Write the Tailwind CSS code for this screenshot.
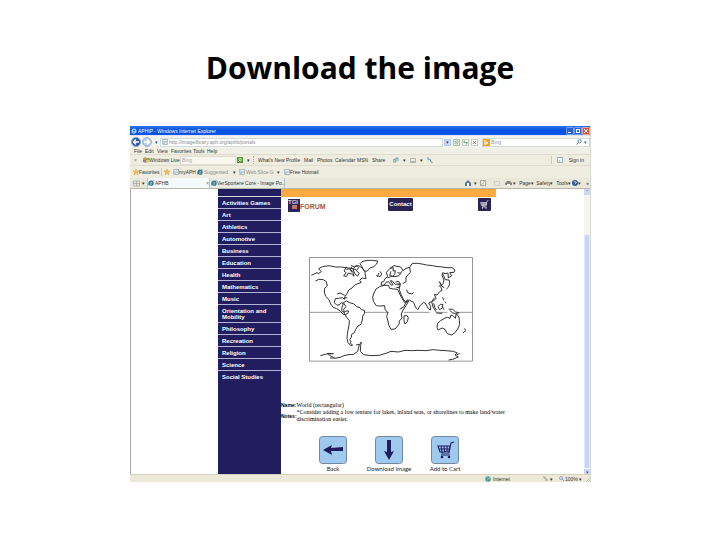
<!DOCTYPE html>
<html lang="en">
<head>
<meta charset="utf-8">
<title>Download the image</title>
<script src="https://cdn.jsdelivr.net/npm/@tailwindcss/browser@4"></script>
</head>
<body class="bg-white text-black font-['Liberation_Sans',Arial,sans-serif]">
<svg class="hidden" aria-hidden="true">
  <symbol id="page" viewBox="0 0 6 6"><rect x=".8" y=".5" width="4.6" height="5" fill="#f4f8fb" stroke="#87a2ad" stroke-width=".7"/><path d="M2 2v3M3 3h2" stroke="#6694b4" stroke-width=".8"/></symbol>
  <symbol id="ie" viewBox="0 0 6 6"><circle cx="3" cy="3.2" r="2" fill="none" stroke="#23708d" stroke-width="1.3"/><path d="M1 3.3h4M.5 5.5Q0 3 5.5.6" fill="none" stroke="#31758b" stroke-width=".8"/></symbol>
  <symbol id="star" viewBox="0 0 6 6"><path d="M3 0l.9 2H6L4.3 3.4 5 5.8 3 4.4 1 5.8l.7-2.4L0 2h2.1z" fill="#fbc04a" stroke="#d48a20" stroke-width=".4"/></symbol>
  <symbol id="cart" viewBox="0 0 18 18"><path d="M17 1l-3 1-2 10H4M1 5h12l-1 5-9 1zM4 5l1 6M7 5l.5 6M10 5v5M2 8h11M4 14h9" fill="none" stroke="currentColor" stroke-width="1.1"/><circle cx="5" cy="16" r="1.3" fill="currentColor"/><circle cx="12" cy="16" r="1.3" fill="currentColor"/></symbol>
</svg>

<main class="px-[130px] pt-[46px]">
  <h1 class="-mx-10 text-center font-['Open_Sans',sans-serif] text-[30px] leading-[44px] font-bold">Download the image</h1>

  <section class="mt-9 -mr-px border-r border-[#d8dcd0] bg-[#efede0] text-[5px] leading-[6px] whitespace-nowrap text-[#33332e]">
    <header class="flex h-[9px] items-center bg-linear-to-b from-[#2a73ea] via-[#0450df] to-[#0554ea] pl-px text-white">
      <svg class="mr-px size-[6px]" viewBox="0 0 6 6"><circle cx="3" cy="3.2" r="2" fill="none" stroke="#a6dcff" stroke-width="1.2"/><path d="M1 3.3h4" stroke="#fff" stroke-width=".7"/></svg>
      <span class="grow">APHIP - Windows Internet Explorer</span>
      <button aria-label="Minimize" class="flex size-2 items-end rounded-[1px] border border-[#719df0] bg-[#2862d8] p-px"><i class="h-px w-[3px] bg-white"></i></button>
      <button aria-label="Maximize" class="size-2 rounded-[1px] border border-[#719df0] bg-[#2862d8] p-px"><i class="block size-1 border border-white"></i></button>
      <button aria-label="Close" class="size-2 rounded-[1px] border border-[#e7a49a] bg-[#d8553b]"><svg viewBox="0 0 6 6"><path d="M1 1l4 4M5 1L1 5" stroke="#fff" stroke-width="1"/></svg></button>
    </header>

    <div class="flex h-[13px] items-center border-t border-[#dce6f4] bg-[#f3f3ed] pl-px">
      <button aria-label="Back" class="size-[10px] rounded-full border border-[#8ba5cb] bg-[#2456a5]"><svg viewBox="0 0 8 8"><path d="M7 4H2M4 1.5L1.5 4 4 6.5" fill="none" stroke="#fff" stroke-width="1.4"/></svg></button>
      <button aria-label="Forward" class="ml-px size-[10px] rounded-full border border-[#9db3cf] bg-[#b9cce4]"><svg viewBox="0 0 8 8"><path d="M1 4h5M4 1.5L6.500 4 4 6.500" fill="none" stroke="#fff" stroke-width="1.4"/></svg></button>
      <span class="w-2 text-center text-[#265a94]">▾</span>
      <label class="flex h-[9px] grow items-center border border-[#d3d9da] bg-white"><svg class="mr-px ml-px size-[6px]"><use href="#page"/></svg><input aria-label="Address" class="min-w-0 grow text-[#8d8d8d]" value="http://imagelibrary.aph.org/aphb/portals"></label>
      <span class="ml-px size-[7px] border border-[#b9c9e6] bg-[#cfdcf6] text-center leading-[5px] text-[#27488c]">▾</span>
      <button aria-label="Compatibility" class="ml-[2px] size-[7px] border border-[#abc6ab] bg-white"><svg viewBox="0 0 5 5"><path d="M1 1l3 3H1zM2 1h2v2" fill="none" stroke="#41a059" stroke-width=".6"/></svg></button>
      <button aria-label="Refresh" class="ml-[2px] size-[7px] border border-[#c6cdc6] bg-white"><svg viewBox="0 0 5 5"><path d="M1 3V1h1.500M4 2v2H2.500M1 2.500h3" fill="none" stroke="#399b52" stroke-width=".7"/></svg></button>
      <button aria-label="Stop" class="ml-[2px] size-[7px] border border-[#c6cdc6] bg-white"><svg viewBox="0 0 5 5"><path d="M1 1l3 3M4 1L1 4" stroke="#bb3d39" stroke-width=".8"/></svg></button>
      <label class="ml-1 flex h-[9px] w-[108px] items-center border border-[#d3d9da] bg-white"><svg class="size-[7px]" viewBox="0 0 7 7"><rect width="7" height="7" fill="#f7a31e"/><path d="M2 1v4.500l3-1.500-2-1" fill="none" stroke="#fff"/></svg><input aria-label="Search" class="ml-px w-20 text-[#969696]" value="Bing">
        <svg class="ml-[5px] size-[6px]" viewBox="0 0 6 6"><circle cx="3.600" cy="2.200" r="1.600" fill="none" stroke="#3e6da6" stroke-width=".8"/><path d="M2.500 3.500L.5 5.500" stroke="#3e6da6"/></svg><span class="ml-[2px] text-[#47658e]">▾</span></label>
    </div>

    <nav class="flex h-[6px] items-center bg-[#f1f0e6] pl-1">
      <span class="w-[11px]">File</span><span class="w-3">Edit</span><span class="w-[14px]">View</span><span class="w-[22px]">Favorites</span><span class="w-[14px]">Tools</span><span>Help</span>
    </nav>

    <div class="flex h-3 items-center border-y border-[#dfddcf] pl-1">
      <span class="w-[9px] text-[#777]">×</span>
      <svg class="size-[6px]" viewBox="0 0 6 6"><path d="M0 1l3-1v3H0z" fill="#e0904a"/><path d="M3 1h3v2H3z" fill="#83ab50"/><path d="M0 3h3v3L0 5z" fill="#5e8cc0"/><path d="M3 3h3v2l-3 1z" fill="#eac153"/></svg>
      <span class="w-[31px]">Windows Live</span>
      <input aria-label="Live search" class="h-[9px] w-14 border border-[#dddcd0] bg-[#f8f7f0] pl-px text-[#aaa]" value="Bing">
      <button aria-label="Go" class="ml-px size-[6px] bg-[#559a36]"><svg viewBox="0 0 6 6"><circle cx="3.200" cy="2.600" r="1.200" fill="none" stroke="#fff" stroke-width=".8"/><path d="M1 5l1.500-1.500" stroke="#fff"/></svg></button>
      <span class="ml-1 w-[6px]">▾</span>
      <span class="mr-[4px] h-2 border-l border-dotted border-[#aaa]"></span>
      <span class="w-7">What's New</span><span class="w-[18px]">Profile</span><span class="w-[13px]">Mail</span><span class="w-[18px]">Photos</span><span class="w-[22px]">Calendar</span><span class="w-[15px]">MSN</span><span class="w-[21px]">Share</span>
      <svg class="size-[6px]" viewBox="0 0 6 6"><path d="M0 6V3l2-1v4M3 5V1h2v3" fill="none" stroke="#5d9696" stroke-width=".9"/></svg><span class="ml-1 w-[7px]">▾</span>
      <svg class="size-[6px]" viewBox="0 0 6 6"><path d="M.5 1.500h5v3h-5zM0 5.500h6" fill="none" stroke="#9b9b93" stroke-width=".7"/></svg><span class="ml-1 w-[7px]">▾</span>
      <svg class="size-[6px]" viewBox="0 0 6 6"><path d="M1 0v3l2-1 1 3 2 1" fill="none" stroke="#6591b0" stroke-width=".9"/></svg>
      <span class="grow"></span>
      <span class="mr-[5px] h-2 border-l border-[#cbc9bb]"></span><span class="flex size-[6px] items-center justify-center border border-[#92b5c0] bg-white text-[#4c8da0]">‹</span><span class="mr-[6px] ml-[6px]">Sign in</span>
    </div>

    <div class="flex h-3 items-center pl-[3px]">
      <svg class="size-[6px]"><use href="#star"/></svg><span class="w-[22px]">Favorites</span>
      <span class="mr-[2px] h-2 border-l border-[#cbc9bb]"></span>
      <svg class="mr-[3px] size-[6px]"><use href="#star"/></svg>
      <svg class="size-[6px]"><use href="#page"/></svg><span class="w-[18px]">myAPH</span>
      <svg class="mr-px size-[6px]"><use href="#ie"/></svg><span class="w-[29px] text-[#8c8c84]">Suggested</span><span class="w-[6px]">▾</span>
      <svg class="mr-px size-[6px]"><use href="#page"/></svg><span class="w-[31px] text-[#8c8c84]">Web Slice G</span><span class="w-[7px]">▾</span>
      <svg class="size-[6px]"><use href="#page"/></svg><span>Free Hotmail</span>
    </div>

    <div class="flex h-[11px] items-center border-b border-[#b8b8ac] bg-[#eae8da] pl-[3px]">
      <svg class="size-[7px]" viewBox="0 0 7 7"><path d="M.5 1h6v5h-6zM.5 3.500h6M3.500 1v5" fill="none" stroke="#98a0a3" stroke-width=".7"/></svg><span class="ml-[2px] w-[5px]">▾</span>
      <a href="#" class="flex h-full w-[63px] items-center border-x border-[#b7c3ce] bg-[#f6f9fb]"><svg class="mr-px size-[6px]"><use href="#ie"/></svg><span class="grow">APHB</span><span class="text-[#667a8d]">×</span></a>
      <a href="#" class="flex h-full w-[75px] items-center border-r border-[#b7c3ce] bg-[#e9ebe5] pl-px"><svg class="size-[6px] shrink-0"><use href="#ie"/></svg><span>VerSportere Core - Image Po..</span></a>
      <span class="grow"></span>
      <svg class="size-[6px]" viewBox="0 0 6 6"><path d="M0 3l3-3 3 3v3H0z" fill="#5379a5"/><path d="M2 6V3h2v3" fill="#fff"/></svg><span class="ml-[3px] w-[6px]">▾</span>
      <svg class="mr-2 size-[6px]" viewBox="0 0 6 6"><rect x=".5" y=".5" width="5" height="5" fill="none" stroke="#aaa99e"/><path d="M1 5l4-4" stroke="#aaa99e" stroke-width=".7"/></svg>
      <svg class="mr-[5px] size-[6px]" viewBox="0 0 6 6"><path d="M.5 1.500h5v4h-5z" fill="none" stroke="#d0cec2"/></svg>
      <svg class="size-[7px]" viewBox="0 0 7 7"><path d="M1.500 1h4v1.500H7V5H0V2.500h1.500z" fill="#85857f"/><path d="M2 4h3v2H2z" fill="#fff"/></svg><span class="ml-px w-[6px]">▾</span>
      <span class="w-[17px]">Page▾</span><span class="w-5">Safety▾</span><span class="w-4">Tools▾</span>
      <svg class="size-[6px]" viewBox="0 0 6 6"><circle cx="3" cy="3" r="3" fill="#345ca0"/><path d="M2 2q1-1 2 0T3 4" fill="none" stroke="#fff" stroke-width=".7"/></svg><span class="w-2">▾</span><span class="mr-px">»</span>
    </div>

    <div class="flex bg-white">
      <div class="w-[88px] shrink-0 border-l border-[#aaa]"></div>
      <nav class="flex w-[63px] shrink-0 flex-col bg-[#211d5f] text-[6px] leading-[6px] font-bold text-white [&>a]:border-b [&>a]:border-[#b5b4d6] [&>a]:pt-[3px] [&>a]:pb-[2px] [&>a]:pl-1">
        <div class="h-2 border-b border-[#d7d7ea]"></div>
        <a href="#">Activities Games</a>
        <a href="#">Art</a>
        <a href="#">Athletics</a>
        <a href="#">Automotive</a>
        <a href="#">Business</a>
        <a href="#">Education</a>
        <a href="#">Health</a>
        <a href="#">Mathematics</a>
        <a href="#">Music</a>
        <a href="#">Orientation and<br>Mobility</a>
        <a href="#">Philosophy</a>
        <a href="#">Recreation</a>
        <a href="#">Religion</a>
        <a href="#">Science</a>
        <div class="py-[3px] pl-1">Social Studies</div>
      </nav>

      <article class="grow pb-[2px]">
        <div class="mr-[88px] h-2 bg-[#fdab40]"></div>
        <div class="mr-[93px] flex items-start justify-between pt-px pl-[7px]">
          <a href="#" class="flex h-[14px] w-9 items-end text-[7px] leading-[10px] font-bold text-[#9b5c4c]"><span class="flex h-[13px] w-3 shrink-0 flex-col bg-[#2c2459] text-[6px] leading-[6px] text-[#e4cfc9]">TGI<i class="ml-1 h-1 w-[5px] bg-[#bf7560]"></i></span><span>FORUM</span></a>
          <a href="#" class="-ml-px h-[13px] w-[25px] rounded-[1px] bg-[#292252] text-center text-[6px] leading-[13px] font-bold text-white">Contact</a>
          <a href="#" aria-label="Cart" class="size-[13px] rounded-[1px] bg-[#292252] p-[2px] text-white"><svg class="size-full"><use href="#cart"/></svg></a>
        </div>

        <svg class="mt-[45px] ml-7 h-[105px] w-[164px]" viewBox="27 21 492 315" role="img" aria-label="World map" fill="none" stroke-linejoin="round">
          <path d="M28.500 22.500h489v311h-489zM28 187h94M194 187h73M311 187h78M407 187h35M479 187h38" stroke="#969696" stroke-width="3"/>
          <g stroke="#333" stroke-width="3">
            <path d="M34 76l17-8 4 3 9-6-8-9 11-6 20-3 20 4 18 0 20 3 14 2 8-7 9-2 10 7 8 8 2 13 2 11-12-2-7 7 5 6-13 5-8 4-7 8-10 6-4 9-7 10-1 9-7-5-12 2-9 1-3 12 8 8 9-3 4-5 6 3-4 11-1 10 7 5 6-4 8 0-3 8-7 3-8-2-7-9-11-7-10-4-8-10-5-13-10-10-4-13 1-11 8-7-3-13-9-6-14-1-10 5"/>
            <path d="M140 50l-8 13 6 5-7 10 9 1 5-10 10 3 7 7-4-15-8-5 5-8M153 47l10 3 8-4 5 7-7 9 9 8-6 8-8-7-5-14 9 2M139 58l12-2 4 11M111 132l9-3 14 7M132 144l10-1"/>
            <path d="M180 41l6-6 15-4 17 0 15 2-3 9-9 8-11 4-9 10-10-2-5-12z"/>
            <path d="M130 158l9-5 10 5 13 4 8 8 10 3 4 6 10 2-1 10-5 7-1 12-4 13-9 5-7 10-4 10-8 5-1 9-5 7 4 6-2 5 7 5-6 2-8-10-3-11 1-13 2-12 3-15 1-14-8-10-7-12-2-12 7-8z"/>
            <path d="M228 117l11-7 13-4 13 0 4 9 12 2 12 1 7 16 7 12 6 11 13-4-8 14-9 13-5 12 2 12-8 9-1 10-7 8-5 6-12 1-6-11-4-17-3-10 3-12-8-10-1-11-15 1-10-1-9-13-2-13 4-12z"/>
            <path d="M244 106l0-10 7-1 4-9 8-6-4-13 11-12 10-2-1 10 7-1-2 12-7 5-8-3 4-12M270 55l12-8 20 4 7 10-8 9-9-2M262 84l13-5 10 1 12-3 6-8M244 106l9-1 5-8 8-2 8 11 5-2-8-12 6 1 8 10 8-1 8 0-2 10-10 1M240 64l5 8-5 8-7-3 4-8M229 76l5 4"/>
            <path d="M309 62l9-7 11-3 8-12 15 0 14 2 14 3 18 2 10 2 19 2 14 2 15 0 9 7-3 7-13 1 6 9-10 7-1-15-9 2-7-3-2 8 6 14-3 11-7 8 4 12-6 3-9 11-8-2 5 12-5 6-9 4-8 4 6 10-1 11-6-4-7-14-7-5-10 9-8 13-7-8-5-14-12-6-8-1-4 8 -5 12-13 8M323 159l-12-9-7-15-6-16 0-12M319 119l5 10 12 3 5-5M329 51l2 16-13 14 0 14-10 6M287 96l9-2 5 8-9 3"/>
            <path d="M427 70l5 10 4 9 11 1 2 10-3 11-7 6M418 95l8 14 7 4M418 95l5 9-7 6M404 143l-9 12 4 16 9 14M401 160l4 14 5 6M414 170l7-7 8 0-3 12-8 4zM409 189l18 1M427 170l5 9M428 142l3 9M434 155l5 4M446 177l12 1 9 8 11 2-12 3-9-3-8-7"/>
            <path d="M413 220l9-8 13-8 8-2 7 3 2-9 6 0 8 9 3-14 8 10 1 12 1 11-6 13-8 11-10 7-13-4-7-13-8-4-13 6-3-8zM494 235l3 7-8 7M312 198l8-2 5 7-3 12-7 7-3-9z"/>
            <path d="M61 317l18-5 21-1-18-1 7 6 15 8-14 0M104 325l17-3 10-5 16-3 14-1 12-9 5-19 6-9-2 10-1 18 10 10 22 3 25-1 20-6 15-6 22 2 20-5 20 1 19-1 24 1 22-3 18 2 20 1 22 2 12 5-7 6 10 6-17 7-12 2M168 285l10-2M470 315l9-5"/>
          </g>
        </svg>

        <table class="mt-10 font-['Liberation_Serif','Times_New_Roman',serif] text-[6px] leading-[7px] text-black">
          <tbody>
            <tr><th class="p-0 text-left font-['Liberation_Sans',Arial,sans-serif] text-[5px]">Name:</th><td class="p-0">World (rectangular)</td></tr>
            <tr><th class="p-0 text-left font-['Liberation_Sans',Arial,sans-serif] text-[5px]">Notes:</th><td class="p-0">*Consider adding a low texture for lakes, inland seas, or shorelines to make land/water<br>discrimination easier.</td></tr>
          </tbody>
        </table>

        <div class="mt-[13px] ml-6 flex gap-0 font-['Lato','Noto_Sans',sans-serif] text-[6px] leading-[7px] text-[#222]">
          <button class="flex w-14 flex-col items-center gap-px"><svg class="size-7" viewBox="0 0 28 28"><rect x=".5" y=".5" width="27" height="27" rx="3" fill="#9fc9ef" stroke="#71869f"/><path d="M4 14l9-5-1 3 12-1v4l-12 0 1 4z" fill="#211d5f"/></svg>Back</button>
          <button class="flex w-14 flex-col items-center gap-px"><svg class="size-7" viewBox="0 0 28 28"><rect x=".5" y=".5" width="27" height="27" rx="3" fill="#9fc9ef" stroke="#71869f"/><path d="M14 24l-5-9 3 1 0-12 4 0 0 12 3-1z" fill="#211d5f"/></svg>Download Image</button>
          <button class="flex w-14 flex-col items-center gap-px"><svg class="size-7" viewBox="0 0 28 28"><rect x=".5" y=".5" width="27" height="27" rx="3" fill="#9fc9ef" stroke="#71869f"/><use href="#cart" x="6" y="5" width="18" height="18" color="#211d5f"/></svg>Add to Cart</button>
        </div>
      </article>

      <div class="flex w-[6px] shrink-0 flex-col bg-[#f5f4ee]">
        <span class="flex size-[6px] items-center justify-center bg-[#c9d8fa] text-[#4c649a]">ˆ</span>
        <span class="h-10"></span>
        <span class="grow rounded-[1px] border-x border-[#dfe8ff] bg-[#c4d4fb]"></span>
        <span class="flex size-[6px] items-center justify-center border-t border-white bg-[#c9d8fa] text-[#4c649a]">▾</span>
      </div>
    </div>

    <footer class="flex h-2 items-center border-t border-[#d5d2bf] bg-[#ece9d8]">
      <span class="grow"></span>
      <svg class="size-[6px]" viewBox="0 0 6 6"><circle cx="3" cy="3" r="2.700" fill="#3f8f99"/><path d="M1.500 1.500l2 1-1 2M4 1l1 2" stroke="#b9e0b8" fill="none" stroke-width=".8"/></svg>
      <span class="ml-[2px] w-[50px]">Internet</span>
      <svg class="size-[5px]" viewBox="0 0 5 5"><path d="M0 1h2v2h2v2H2" fill="none" stroke="#888" stroke-width=".8"/></svg><span class="ml-[2px] w-[9px]">▾</span>
      <svg class="size-[5px]" viewBox="0 0 5 5"><circle cx="2" cy="2" r="1.500" fill="none" stroke="#6b8fb5" stroke-width=".7"/><path d="M3 3l2 2" stroke="#6b8fb5"/></svg><span class="ml-px w-[14px]">100%</span><span class="w-[6px]">▾</span>
      <svg class="mt-px size-[5px]" viewBox="0 0 5 5"><path d="M5 1L1 5M5 3L3 5" stroke="#b0ad9c" stroke-width=".7"/></svg>
    </footer>
  </section>
</main>
</body>
</html>
